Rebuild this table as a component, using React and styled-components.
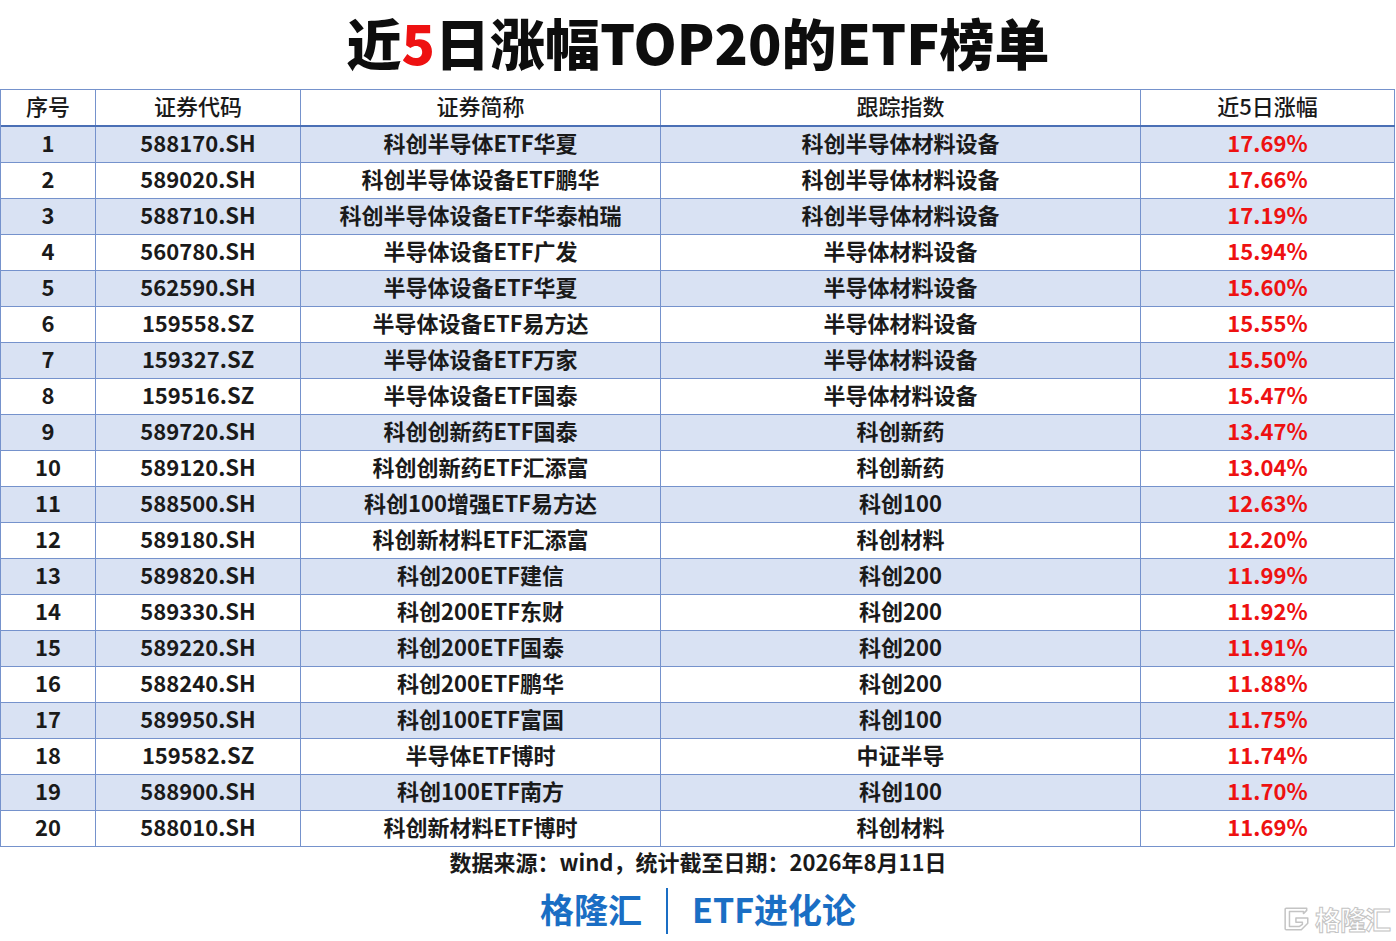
import React from "react";
import styled, { createGlobalStyle } from "styled-components";

const Global = createGlobalStyle`
  html, body { margin: 0; padding: 0; background: #ffffff; }
  body { font-family: "Noto Sans CJK SC", "Noto Sans", sans-serif; }
`;

const Page = styled.div`
  position: relative;
  width: 1396px;
  height: 941px;
  background: #ffffff;
  overflow: hidden;
  color: #111;
`;

const Title = styled.h1`
  margin: 0;
  height: 89px;
  display: flex;
  align-items: center;
  justify-content: center;
  font-size: 55px;
  font-weight: 900;
  color: #0d0d0d;
  padding-bottom: 6px;
  box-sizing: border-box;
  line-height: 1;
`;

const Red = styled.span`
  color: #ee1111;
`;

const Table = styled.div`
  width: 1395px;
  border-left: 1px solid #7592cc;
  border-top: 1px solid #7592cc;
  box-sizing: border-box;
`;

const Row = styled.div`
  display: grid;
  grid-template-columns: 95px 205px 360px 480px 254px;
  height: ${(p) => (p.$head ? "37px" : "36px")};
  background: ${(p) => (p.$shade ? "#d9e2f3" : "#ffffff")};
  border-bottom: ${(p) => (p.$head ? "2px solid #4a6fb5" : "1px solid #7592cc")};
  box-sizing: border-box;
`;

const Cell = styled.div`
  display: flex;
  align-items: center;
  justify-content: center;
  border-right: 1px solid #7592cc;
  box-sizing: border-box;
  padding-bottom: 5px;
  font-size: 22px;
  font-weight: ${(p) => (p.$head ? 500 : 700)};
  color: ${(p) => (p.$red ? "#ee1111" : "#1a1a1a")};
  white-space: nowrap;
  line-height: 1;
`;

const Source = styled.div`
  height: 30px;
  display: flex;
  align-items: center;
  justify-content: center;
  font-size: 22px;
  font-weight: 700;
  color: #1a1a1a;
  line-height: 1;
  padding-bottom: 2px;
  box-sizing: border-box;
`;

const Brand = styled.div`
  display: flex;
  align-items: center;
  justify-content: center;
  gap: 24px;
  height: 60px;
  margin-top: 4px;
  font-size: 34px;
  font-weight: 700;
  color: #1a6ec4;
  line-height: 1;
`;

const BrandText = styled.span`
  padding-bottom: 4px;
`;

const Divider = styled.span`
  display: block;
  width: 2px;
  height: 46px;
  background: #1a6ec4;
`;

const Watermark = styled.div`
  position: absolute;
  right: 6px;
  bottom: 9px;
  display: flex;
  align-items: center;
  gap: 4px;
`;

const WaterText = styled.span`
  font-size: 26px;
  font-weight: 700;
  color: #ffffff;
  -webkit-text-stroke: 1px #c4c4c4;
  letter-spacing: -1px;
  line-height: 1;
`;

const rows = [
  ["1", "588170.SH", "科创半导体ETF华夏", "科创半导体材料设备", "17.69%"],
  ["2", "589020.SH", "科创半导体设备ETF鹏华", "科创半导体材料设备", "17.66%"],
  ["3", "588710.SH", "科创半导体设备ETF华泰柏瑞", "科创半导体材料设备", "17.19%"],
  ["4", "560780.SH", "半导体设备ETF广发", "半导体材料设备", "15.94%"],
  ["5", "562590.SH", "半导体设备ETF华夏", "半导体材料设备", "15.60%"],
  ["6", "159558.SZ", "半导体设备ETF易方达", "半导体材料设备", "15.55%"],
  ["7", "159327.SZ", "半导体设备ETF万家", "半导体材料设备", "15.50%"],
  ["8", "159516.SZ", "半导体设备ETF国泰", "半导体材料设备", "15.47%"],
  ["9", "589720.SH", "科创创新药ETF国泰", "科创新药", "13.47%"],
  ["10", "589120.SH", "科创创新药ETF汇添富", "科创新药", "13.04%"],
  ["11", "588500.SH", "科创100增强ETF易方达", "科创100", "12.63%"],
  ["12", "589180.SH", "科创新材料ETF汇添富", "科创材料", "12.20%"],
  ["13", "589820.SH", "科创200ETF建信", "科创200", "11.99%"],
  ["14", "589330.SH", "科创200ETF东财", "科创200", "11.92%"],
  ["15", "589220.SH", "科创200ETF国泰", "科创200", "11.91%"],
  ["16", "588240.SH", "科创200ETF鹏华", "科创200", "11.88%"],
  ["17", "589950.SH", "科创100ETF富国", "科创100", "11.75%"],
  ["18", "159582.SZ", "半导体ETF博时", "中证半导", "11.74%"],
  ["19", "588900.SH", "科创100ETF南方", "科创100", "11.70%"],
  ["20", "588010.SH", "科创新材料ETF博时", "科创材料", "11.69%"],
];

const headers = ["序号", "证券代码", "证券简称", "跟踪指数", "近5日涨幅"];

function LogoMark() {
  return (
    <svg width="28" height="26" viewBox="0 0 26 24" fill="none" stroke="#c4c4c4" strokeWidth="1.4">
      <path d="M22 4 V2 H3 a1 1 0 0 0 -1 1 V21 a1 1 0 0 0 1 1 H17 L23 16 V11 H12 V15 H18 V17 L15 19 H6 V5 H19 V7 Z" strokeLinejoin="round" />
    </svg>
  );
}

export default function App() {
  return (
    <Page>
      <Global />
      <Title>
        近<Red>5</Red>日涨幅TOP20的ETF榜单
      </Title>
      <Table>
        <Row $head>
          {headers.map((h) => (
            <Cell key={h} $head>
              {h}
            </Cell>
          ))}
        </Row>
        {rows.map((r, i) => (
          <Row key={r[0]} $shade={i % 2 === 0}>
            <Cell>{r[0]}</Cell>
            <Cell>{r[1]}</Cell>
            <Cell>{r[2]}</Cell>
            <Cell>{r[3]}</Cell>
            <Cell $red>{r[4]}</Cell>
          </Row>
        ))}
      </Table>
      <Source>数据来源：wind，统计截至日期：2026年8月11日</Source>
      <Brand>
        <BrandText>格隆汇</BrandText>
        <Divider />
        <BrandText>ETF进化论</BrandText>
      </Brand>
      <Watermark>
        <LogoMark />
        <WaterText>格隆汇</WaterText>
      </Watermark>
    </Page>
  );
}
